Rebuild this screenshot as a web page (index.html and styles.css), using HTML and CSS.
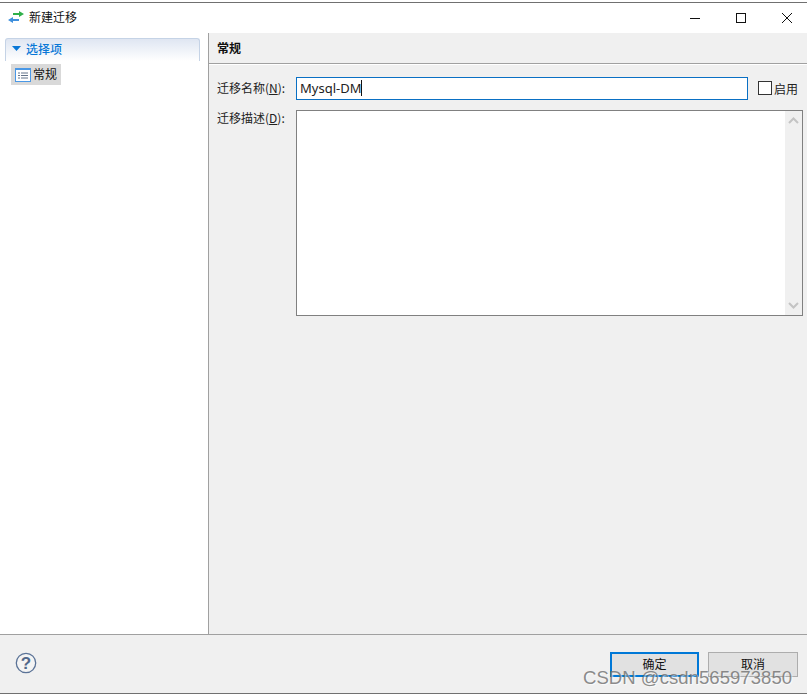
FILE: index.html
```
<!DOCTYPE html>
<html lang="zh">
<head>
<meta charset="utf-8">
<title>新建迁移</title>
<link rel="stylesheet" href="styles.css">
</head>
<body>
<div class="window">
  <header class="titlebar">
    <div class="title">
      <svg class="app-icon" width="16" height="12" viewBox="0 0 16 12">
        <path d="M5 2h6V0l5 3-5 3V4H5z" fill="#2fb04a"/>
        <path d="M0 9l5-3v2h6v2H5v2z" fill="#3f8fdc"/>
      </svg>
      <span class="title-text">新建迁移</span>
    </div>
    <div class="win-controls">
      <svg width="12" height="12" viewBox="0 0 12 12"><path d="M1 6.500h10" stroke="#111" fill="none"/></svg>
      <svg width="12" height="12" viewBox="0 0 12 12"><rect x="1.500" y="1.500" width="9" height="9" stroke="#111" fill="none"/></svg>
      <svg width="12" height="12" viewBox="0 0 12 12"><path d="M1 1l10 10M11 1L1 11" stroke="#111" fill="none"/></svg>
    </div>
  </header>
  <main class="content">
    <aside class="sidebar">
      <div class="section-head">
        <svg class="twisty" width="9" height="5" viewBox="0 0 9 5"><path d="M0 0h9L4.500 5z" fill="#0a78d7"/></svg>
        <span>选择项</span>
      </div>
      <div class="nav-item">
        <svg width="16" height="14" viewBox="0 0 16 14">
          <rect x="0" y="0" width="16" height="14" fill="#4a98e6"/>
          <rect x="1" y="2" width="14" height="11" fill="#fff"/>
          <path d="M3 5h2M6 5h7M3 7.500h2M6 7.500h7M3 10h2M6 10h7" stroke="#64748a" fill="none"/>
        </svg>
        <span class="nav-text">常规</span>
      </div>
    </aside>
    <section class="panel">
      <h2 class="panel-title">常规</h2>
      <div class="form">
        <div class="row">
          <label class="label">迁移名称(<u>N</u>):</label>
          <div class="input">Mysql-DM<span class="caret"></span></div>
          <label class="check"><span class="box"></span>启用</label>
        </div>
        <div class="row desc-row">
          <label class="label">迁移描述(<u>D</u>):</label>
          <div class="textarea">
            <div class="scrollbar">
              <svg width="11" height="7" viewBox="0 0 11 7"><path d="M1 6l4.500-4.500L10 6" stroke="#c4c4c4" stroke-width="2" fill="none"/></svg>
              <svg width="11" height="7" viewBox="0 0 11 7"><path d="M1 1l4.500 4.500L10 1" stroke="#c4c4c4" stroke-width="2" fill="none"/></svg>
            </div>
          </div>
        </div>
      </div>
    </section>
  </main>
  <footer class="footer">
    <svg class="help" width="22" height="22" viewBox="0 0 22 22">
      <circle cx="11" cy="11" r="9.700" fill="#f4f4f4" stroke="#5b7397" stroke-width="1.300"/>
      <text x="11" y="17" text-anchor="middle" class="help-mark">?</text>
    </svg>
    <div class="buttons">
      <button class="btn btn-default"><span class="btn-text">确定</span></button>
      <button class="btn"><span class="btn-text">取消</span></button>
    </div>
  </footer>
</div>
<div class="watermark">CSDN @csdn565973850</div>
</body>
</html>
```

FILE: styles.css
```
html, body {
  margin: 0;
  padding: 0;
  height: 695px;
  background: #fff;
  overflow: hidden;
}
body {
  position: relative;
  font-family: "Noto Sans CJK SC", "Noto Sans", sans-serif;
  font-size: 12px;
  color: #111;
}
.window {
  margin-top: 2px;
  height: 692px;
  border-top: 1px solid #707070;
  border-bottom: 1px solid #707070;
  box-sizing: border-box;
  display: flex;
  flex-direction: column;
}
.titlebar {
  height: 30px;
  flex: none;
  display: flex;
  align-items: center;
  justify-content: space-between;
  background: #fff;
}
.title {
  display: flex;
  align-items: center;
  gap: 5px;
  padding-left: 8px;
}
.title-text {
  padding-bottom: 3px;
}
.app-icon {
  flex: none;
  margin-bottom: 2px;
}
.win-controls {
  display: flex;
  gap: 34px;
  padding-right: 14px;
}
.content {
  flex: 1;
  min-height: 0;
  display: flex;
}
.sidebar {
  flex: none;
  box-sizing: border-box;
  background: #fff;
  border-right: 1px solid #a0a0a0;
  width: 209px;
  padding: 5px 8px 0 5px;
}
.section-head {
  height: 23px;
  box-sizing: border-box;
  display: flex;
  align-items: center;
  gap: 5px;
  padding: 0 0 3px 6px;
  color: #0a78d7;
  font-size: 12px;
  font-weight: 500;
  border: 1px solid #c5d3e6;
  border-bottom: none;
  border-radius: 3px 3px 0 0;
  background: linear-gradient(#dfe6f2, #ffffff);
}
.nav-item {
  margin: 3px 0 0 6px;
  width: 50px;
  height: 21px;
  background: #d9d9d9;
  display: flex;
  align-items: center;
  gap: 2px;
  padding-left: 4px;
  box-sizing: border-box;
}
.nav-text {
  padding-bottom: 2px;
}
.panel {
  flex: 1;
  min-width: 0;
  background: #f0f0f0;
  display: flex;
  flex-direction: column;
}
.panel-title {
  margin: 0;
  height: 31px;
  box-sizing: border-box;
  border-bottom: 1px solid #a0a0a0;
  padding: 6px 0 0 8px;
  font-size: 12px;
  font-weight: 700;
  line-height: 18px;
  box-shadow: 0 1px 0 #fff;
}
.form {
  padding: 13px 4px 0 8px;
  display: flex;
  flex-direction: column;
  gap: 10px;
}
.row {
  display: flex;
  align-items: center;
}
.desc-row { align-items: flex-start; }
.label {
  width: 79px;
  flex: none;
  line-height: 18px;
  color: #222;
  padding-bottom: 2px;
}
.desc-row .label {
  margin-top: -1px;
  padding-bottom: 0;
}
.input {
  width: 452px;
  height: 23px;
  box-sizing: border-box;
  flex: none;
  border: 1px solid #0a70c4;
  background: #fff;
  padding: 0 0 1px 3px;
  font-size: 13px;
  line-height: 20px;
  color: #222;
  font-family: "Noto Sans", sans-serif;
  display: flex;
  align-items: center;
}
.caret {
  width: 1px;
  height: 16px;
  background: #111;
}
.check {
  display: flex;
  align-items: center;
  gap: 2px;
  margin-left: 10px;
  color: #222;
  padding-bottom: 1px;
}
.box {
  width: 12px;
  height: 12px;
  border: 1px solid #333;
  background: #fff;
}
.textarea {
  flex: 1;
  height: 206px;
  box-sizing: border-box;
  border: 1px solid #808080;
  background: #fff;
  display: flex;
  justify-content: flex-end;
}
.scrollbar {
  width: 17px;
  background: #f0f0f0;
  display: flex;
  flex-direction: column;
  justify-content: space-between;
  align-items: center;
  padding: 6px 0;
  box-sizing: border-box;
}
.footer {
  height: 59px;
  flex: none;
  background: #f0f0f0;
  border-top: 1px solid #a0a0a0;
  box-sizing: border-box;
  display: flex;
  align-items: flex-start;
  justify-content: space-between;
  padding: 17px 9px 0 15px;
}
.help-mark {
  font-family: "Liberation Sans", sans-serif;
  font-weight: 700;
  font-size: 17px;
  fill: #52688a;
}
.buttons {
  display: flex;
  gap: 9px;
}
.btn {
  width: 90px;
  height: 25px;
  box-sizing: border-box;
  border: 1px solid #adadad;
  background: #e1e1e1;
  font: 12px "Noto Sans CJK SC", sans-serif;
  color: #111;
  padding: 0 0 2px;
}
.btn-default {
  width: 89px;
  border: 2px solid #0078d7;
}
.watermark {
  position: absolute;
  left: 583px;
  top: 667px;
  font-family: "Liberation Sans", sans-serif;
  font-size: 18.600px;
  line-height: 22px;
  color: rgba(110,110,110,.8);
  text-shadow: 1px 1px 1px rgba(255,255,255,.7);
  white-space: nowrap;
}
```
